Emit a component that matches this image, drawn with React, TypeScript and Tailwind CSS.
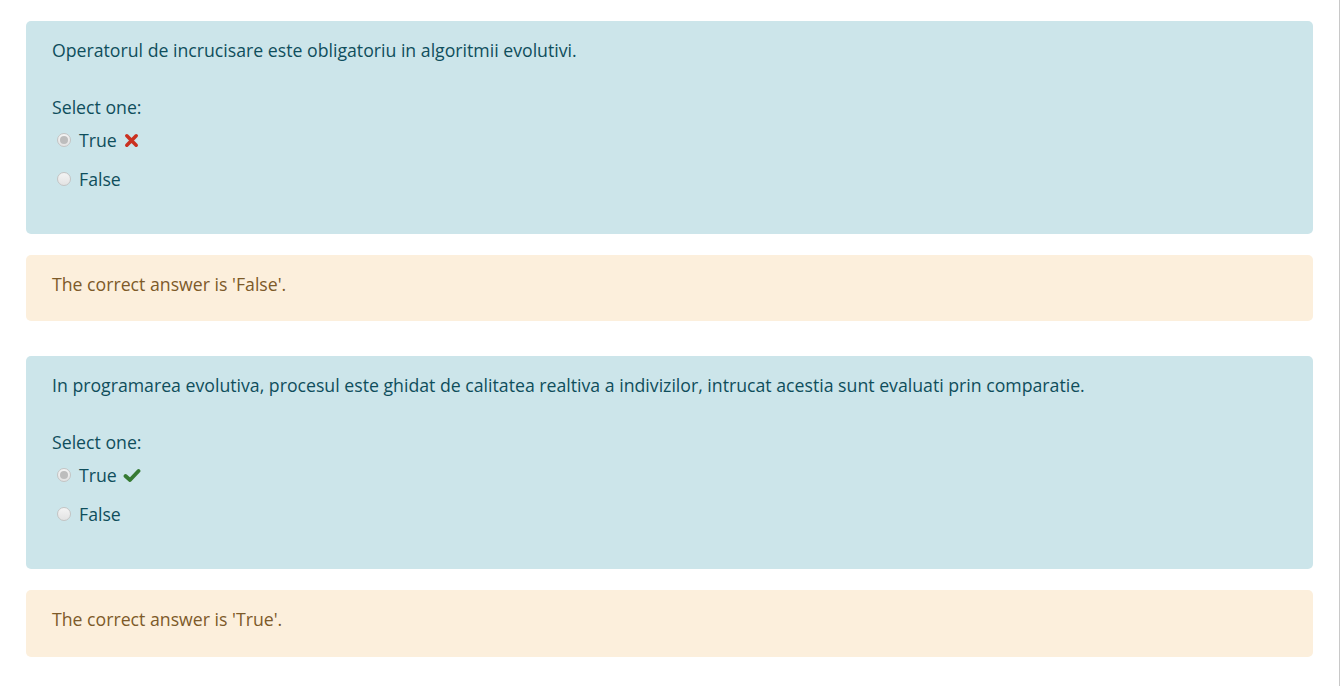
import React from "react";

function Radio({ checked }: { checked?: boolean }) {
  return (
    <span className="relative inline-flex h-[14px] w-[14px] items-center justify-center rounded-full border border-[#c4c4c4] bg-gradient-to-b from-[#f4f4f4] to-[#e3e3e3]">
      {checked && <span className="h-[8px] w-[8px] rounded-full bg-[#bdbdbd]" />}
    </span>
  );
}

function Cross() {
  return (
    <svg width="15" height="15" viewBox="0 0 16 16" className="ml-[7px]">
      <path d="M3 3 L13 13 M13 3 L3 13" stroke="#ca3120" strokeWidth="3.8" strokeLinecap="round" />
    </svg>
  );
}

function Check() {
  return (
    <svg width="18" height="15" viewBox="0 0 18 15" className="ml-[6px]">
      <path d="M2.5 8 L7 12 L15.5 3" fill="none" stroke="#357a32" strokeWidth="3.8" strokeLinecap="round" strokeLinejoin="round" />
    </svg>
  );
}

function Question({ text, mark }: { text: string; mark: "x" | "v" }) {
  return (
    <div className="h-[213px] rounded-[5px] bg-[#cce5ea] px-[26px] pt-[16px] text-[#0f4e5c]">
      <p className="leading-[26px]">{text}</p>
      <p className="mt-[31px] leading-[26px]">Select one:</p>
      <div className="mt-[5px] flex h-[30px] items-center pl-[5px]">
        <Radio checked />
        <span className="ml-[8px]">True</span>
        {mark === "x" ? <Cross /> : <Check />}
      </div>
      <div className="mt-[9px] flex h-[30px] items-center pl-[5px]">
        <Radio />
        <span className="ml-[8px]">False</span>
      </div>
    </div>
  );
}

function Feedback({ text, h }: { text: string; h: "a" | "b" }) {
  return (
    <div
      className={`${h === "a" ? "h-[66px]" : "h-[67px]"} rounded-[5px] bg-[#fcefdc] px-[26px] pt-[16px] leading-[26px] text-[#7d5a29]`}
    >
      {text}
    </div>
  );
}

export default function App() {
  return (
    <div
      className="flex h-[686px] w-[1340px] border-r border-[#c8c8c8] bg-white text-[17.7px]"
      style={{ fontFamily: '"Open Sans", "Noto Sans", sans-serif' }}
    >
      <div className="flex w-[1313px] flex-col pl-[26px] pt-[21px]">
        <Question text="Operatorul de incrucisare este obligatoriu in algoritmii evolutivi." mark="x" />
        <div className="mt-[21px]">
          <Feedback text="The correct answer is 'False'." h="a" />
        </div>
        <div className="mt-[35px]">
          <Question
            text="In programarea evolutiva, procesul este ghidat de calitatea realtiva a indivizilor, intrucat acestia sunt evaluati prin comparatie."
            mark="v"
          />
        </div>
        <div className="mt-[21px]">
          <Feedback text="The correct answer is 'True'." h="b" />
        </div>
      </div>
    </div>
  );
}
